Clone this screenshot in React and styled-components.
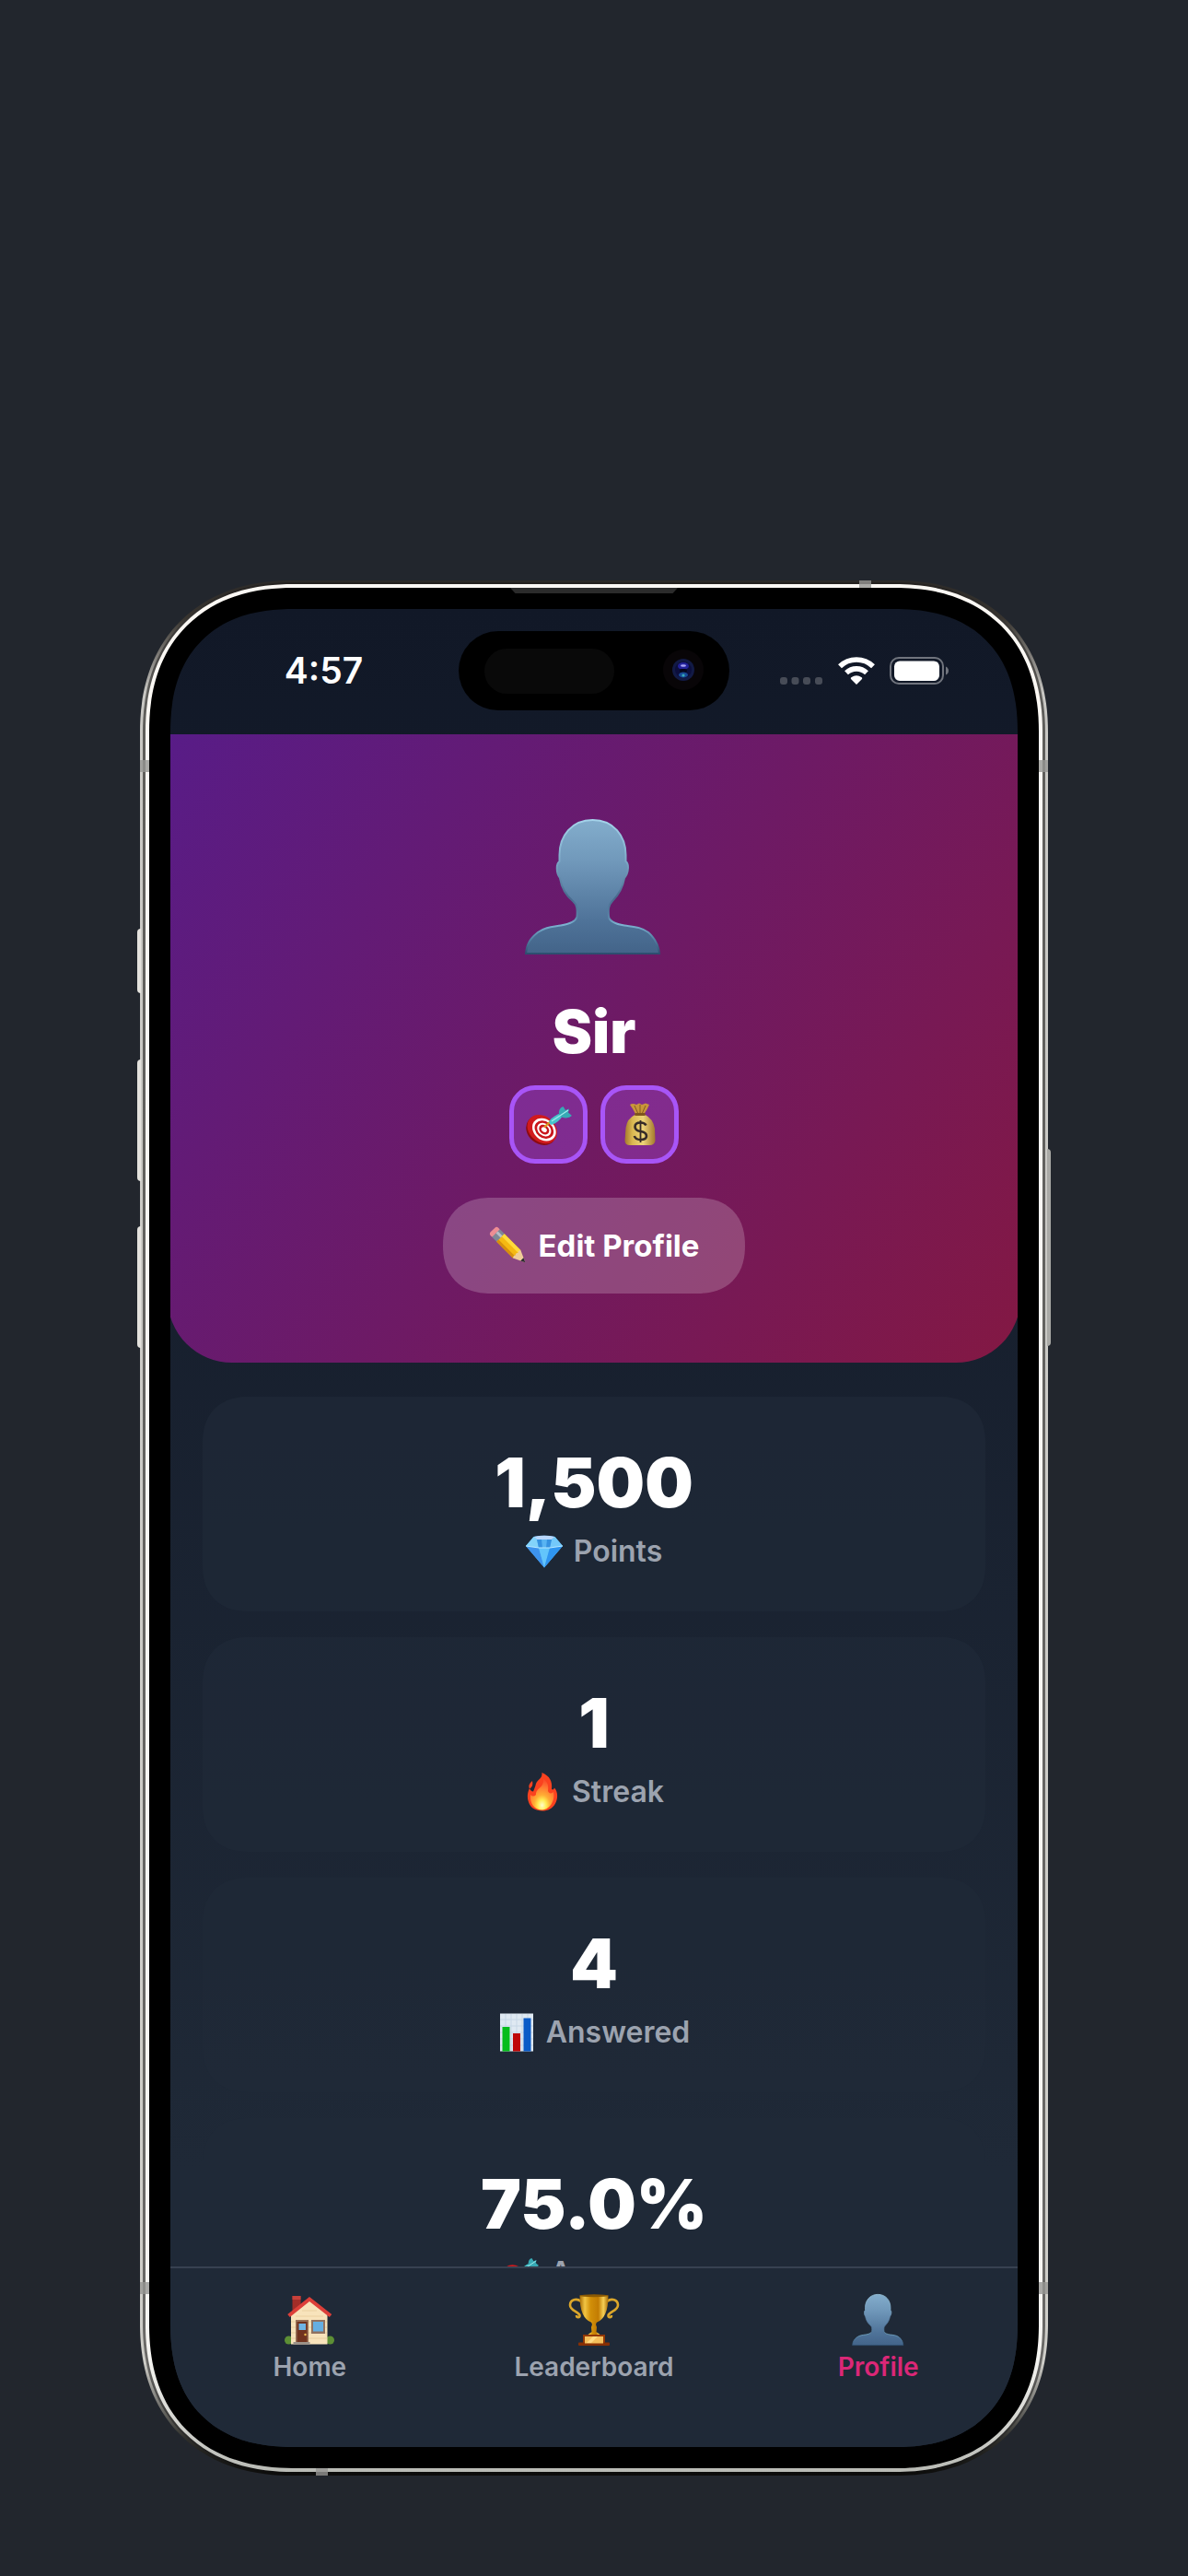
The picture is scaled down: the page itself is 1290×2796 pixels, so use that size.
import React from 'react';
import styled, { createGlobalStyle, css } from 'styled-components';

const GlobalStyle = createGlobalStyle`
  * {
    box-sizing: border-box;
  }

  body {
    margin: 0;
    background-color: #22262d;
    font-family: Inter, 'Liberation Sans', sans-serif;
    color: #fff;
  }
`;

// Smooth corners where the browser has them, plain round ones elsewhere
const smoothCorner = (round, smooth, k) => css`
  border-radius: ${round}px;

  @supports (corner-shape: superellipse(2)) {
    border-radius: ${smooth}px;
    corner-shape: superellipse(${k});
  }
`;

const Page = styled.main`
  min-height: 100vh;
  display: flex;
  flex-direction: column;
  justify-content: flex-end;
  padding: 0 152px 109px;
`;

/* ---------- phone body ---------- */

const Phone = styled.div`
  position: relative;
  flex: none;
  display: flex;
  width: 100%;
  min-height: 0;
  aspect-ratio: 986 / 2057;
`;

const OuterRim = styled.div`
  flex: 1;
  display: flex;
  min-width: 0;
  padding: 2px 3px;
  background: linear-gradient(#2c2a28, #38342f 2%, #c9c8c4 6%, #cfcec9 94%, #30302c 98%, #0c0c0b);
  ${smoothCorner(150, 165, 1.16)}
`;

const DarkRim = styled.div`
  flex: 1;
  display: flex;
  min-width: 0;
  padding: 2px 3px;
  background: linear-gradient(#24211f, #5f5e5b 6%, #6a6967 94%, #0c0c0b);
  ${smoothCorner(148, 163, 1.16)}
`;

const BrightRim = styled.div`
  flex: 1;
  display: flex;
  min-width: 0;
  padding: 4px;
  background: linear-gradient(#fbf8f4, #f6f5f2 94%, #b8bab4);
  ${smoothCorner(145, 160, 1.17)}
`;

const Bezel = styled.div`
  flex: 1;
  display: flex;
  min-width: 0;
  padding: 23px;
  background-color: #000;
  ${smoothCorner(141, 156, 1.18)}
`;

const SideKey = styled.span`
  position: absolute;
  top: ${({ $top }) => $top}%;
  height: ${({ $height }) => $height}%;
  width: 4px;
  background-color: #e4e2dd;
  ${({ $side }) =>
    $side === 'left'
      ? 'left: -3px; border-radius: 4px 0 0 4px;'
      : 'right: -3px; border-radius: 0 4px 4px 0; background-color: #a9a9a5;'}
`;

const Antenna = styled.span`
  position: absolute;
  background-color: rgba(150, 150, 147, 0.8);
  ${({ $edge, $at }) =>
    $edge === 'left' || $edge === 'right'
      ? `${$edge}: 0; top: ${$at}%; width: 10px; height: 13px;`
      : `${$edge}: 0; left: ${$at}%; width: 13px; height: 8px;`}
`;

const Earpiece = styled.span`
  position: absolute;
  top: 8px;
  left: 50%;
  width: 182px;
  height: 6px;
  margin-left: -91px;
  background-color: #2b2b2b;
  clip-path: polygon(0 0, 100% 0, 97% 100%, 3% 100%);
`;

/* ---------- screen ---------- */

const Screen = styled.div`
  flex: 1;
  display: flex;
  flex-direction: column;
  min-width: 0;
  overflow: hidden;
  background: linear-gradient(#111827, #1f2937 85%);
  ${smoothCorner(118, 135, 1.25)}
`;

const StatusBar = styled.header`
  flex: none;
  display: grid;
  grid-template-columns: 1fr 294px 1fr;
  align-items: center;
  height: 136px;
  padding: 0 20px 2px;
`;

const Time = styled.time`
  text-align: center;
  font-size: 39px;
  font-weight: 600;
  line-height: 48px;
`;

const Island = styled.div`
  display: flex;
  align-items: center;
  justify-content: space-between;
  height: 86px;
  padding: 0 27px 0 28px;
  border-radius: 43px;
  background-color: #000;
`;

const Sensor = styled.span`
  width: 141px;
  height: 49px;
  border-radius: 25px;
  background-color: #090909;
`;

const Indicators = styled.div`
  display: flex;
  align-items: center;
  justify-content: center;
  gap: 16px;
`;

const Scroller = styled.div`
  flex: 1 1 0;
  min-height: 0;
  margin: 0 -3px;
  overflow: hidden;
  contain: size;
`;

const Hero = styled.section`
  display: flex;
  flex-direction: column;
  align-items: center;
  padding: 92px 0 75px;
  border-radius: 0 0 70px 70px;
  background: linear-gradient(126deg, #581c87, #831843);
`;

const Name = styled.h1`
  margin: 45px 0 19px;
  font-size: 65px;
  font-weight: 900;
  line-height: 78px;
`;

const Badges = styled.div`
  display: flex;
  gap: 14px;
`;

const Badge = styled.span`
  display: flex;
  align-items: center;
  justify-content: center;
  width: 85px;
  height: 85px;
  border: 5px solid #a855f7;
  border-radius: 28px;
  background-color: rgba(168, 85, 247, 0.3);
`;

const EditButton = styled.button`
  display: flex;
  align-items: center;
  gap: 12px;
  height: 104px;
  margin-top: 37px;
  padding: 0 50px;
  border: 0;
  background-color: rgba(255, 255, 255, 0.2);
  color: #fff;
  font-family: inherit;
  font-size: 33px;
  font-weight: 700;
  cursor: pointer;
  ${smoothCorner(50, 52, 1.2)}
`;

const Stats = styled.section`
  display: flex;
  flex-direction: column;
  gap: 28px;
  padding: 37px 38px;
`;

const Card = styled.article`
  display: flex;
  flex-direction: column;
  align-items: center;
  gap: 8px;
  padding: 48px 0 43px;
  background-color: rgba(31, 41, 55, 0.7);
  ${smoothCorner(46, 50, 1.2)}
`;

const Value = styled.strong`
  font-size: 74px;
  font-weight: 900;
  line-height: 90px;
`;

const Label = styled.span`
  display: flex;
  align-items: center;
  gap: 12px;
  color: #9ca3af;
  font-size: 32px;
  font-weight: 600;
  line-height: 44px;
`;

const TabBar = styled.nav`
  flex: none;
  display: grid;
  grid-template-columns: repeat(3, 1fr);
  margin: 0 -3px;
  padding: 28px 0 70px;
  border-top: 2px solid #374151;
  background-color: #1f2937;
`;

const Tab = styled.a`
  display: flex;
  flex-direction: column;
  align-items: center;
  gap: 6px;
  color: ${({ $active }) => ($active ? '#db2777' : '#9ca3af')};
  font-size: 28px;
  font-weight: 600;
  line-height: 34px;
  text-decoration: none;
`;

/* ---------- drawings ---------- */

const Camera = () => (
  <svg width="46" height="46" viewBox="0 0 46 46" aria-hidden="true">
    <circle cx="23" cy="22" r="22" fill="#080507" />
    <circle cx="23" cy="22" r="12" fill="#121a45" />
    <circle cx="23" cy="22" r="9" fill="#0c0e3c" />
    <ellipse cx="23" cy="18" rx="6" ry="4" fill="#23229a" />
    <ellipse cx="23" cy="17.500" rx="3" ry="1.300" fill="#a9a5f5" />
    <rect x="19" y="21" width="8" height="4" rx="2" fill="#05051a" />
    <ellipse cx="23" cy="27.500" rx="5" ry="3" fill="#174a96" />
    <circle cx="23" cy="28" r="1.600" fill="#37a9b5" />
  </svg>
);

const SignalDots = () => (
  <svg width="47" height="30" viewBox="0 0 47 30" fill="#474c57" aria-hidden="true">
    <rect x="0" y="22" width="8" height="8" rx="3" />
    <rect x="12.500" y="22" width="8" height="8" rx="3" />
    <rect x="25" y="22" width="8" height="8" rx="3" />
    <rect x="38" y="22" width="8" height="8" rx="3" />
  </svg>
);

const Wifi = () => (
  <svg width="40" height="30" viewBox="0 0 40 30" aria-hidden="true">
    <g fill="none" stroke="#fff" strokeWidth="5.600">
      <path d="M2 10.300 A26 26 0 0 1 38 10.300" />
      <path d="M9 17.300 A16 16 0 0 1 31 17.300" />
    </g>
    <path d="M20 30 L14 24 Q13.300 23 14.300 22.300 Q20 18.200 25.700 22.300 Q26.700 23 26 24 Z" fill="#fff" />
  </svg>
);

const Battery = () => (
  <svg width="65" height="30" viewBox="0 0 65 30" aria-hidden="true">
    <rect x="1" y="1" width="57" height="28" rx="9" fill="none" stroke="#70747d" strokeWidth="2" />
    <rect x="5" y="4.500" width="49" height="21.500" rx="6" fill="#fff" />
    <path d="M61 10.500 Q64 12 64 15 Q64 18 61 19.500 Z" fill="#70747d" />
  </svg>
);

const Person = ({ size }) => (
  <svg width={size} height={size} viewBox="2 0 147 147" aria-hidden="true" overflow="visible">
    <defs>
      <linearGradient id="skin" x1="0" y1="0" x2="0" y2="1">
        <stop offset="0" stopColor="#83adcc" />
        <stop offset="0.300" stopColor="#7199bb" />
        <stop offset="0.750" stopColor="#4f7399" />
        <stop offset="1" stopColor="#436489" />
      </linearGradient>
      <linearGradient id="skinEdge" x1="0" y1="0" x2="0" y2="1">
        <stop offset="0" stopColor="#a4d3ea" />
        <stop offset="0.300" stopColor="#7fabc9" />
        <stop offset="0.580" stopColor="#48698d" />
        <stop offset="0.730" stopColor="#5b86a8" />
        <stop offset="0.780" stopColor="#7db4d2" />
        <stop offset="0.920" stopColor="#4b7598" />
        <stop offset="1" stopColor="#2d4d6f" />
      </linearGradient>
    </defs>
    <path
      d="M73.500 1 C51 1 37.500 18 37.500 39 V46 C34 48 33.500 58 38 64 C40 76 46 84 52 89 C57 93 57 99 56.500 106 C55 112 45 114.500 39 115.500 C30 117 22 117 14 123 C5 130 2 136 1 146 H146 C145 137 142 130 134 123 C126 117 118 117 108 115.500 C102 114.500 92 112 91 106 C90.500 99 90 94 95 89 C101 83 106 76 108 64 C113 58 113 48 109.500 46 V39 C109.500 18 96 1 73.500 1 Z"
      fill="url(#skin)"
      stroke="url(#skinEdge)"
      strokeWidth="2"
    />
  </svg>
);

const Target = ({ size }) => (
  <svg width={size} height={size} viewBox="0 0 50 50" aria-hidden="true">
    <g transform="translate(17.500 30) rotate(40) scale(0.930) translate(-18 -29)">
      <ellipse cx="18" cy="30.500" rx="19" ry="15.500" fill="#8d0b12" />
      <ellipse cx="18" cy="28.500" rx="19" ry="15" fill="#d01a1d" />
      <ellipse cx="20" cy="27.500" rx="15" ry="12" fill="#fff" />
      <ellipse cx="20" cy="27.500" rx="12" ry="9.500" fill="#c9171c" />
      <ellipse cx="20" cy="27.500" rx="9" ry="7" fill="#fff" />
      <ellipse cx="20" cy="27.500" rx="6.500" ry="5" fill="#c9171c" />
      <ellipse cx="20" cy="27.500" rx="3.500" ry="2.600" fill="#fff" />
    </g>
    <path d="M20 27.500 L27 21" stroke="#d99a1c" strokeWidth="2.200" />
    <path d="M25.500 20.500 Q30 15 38 12 L40 15 Q36 22 28 25 Q25 24 25.500 20.500 Z" fill="#45c4cb" />
    <path d="M36 14 Q35 7 40.500 5 L43 9 L47 7.500 L46 11.500 L50 15 Q46 19 38.500 16.500 Z" fill="#37aab5" />
    <path d="M28 21 L46 9" stroke="#a4edee" strokeWidth="1.200" />
  </svg>
);

const MoneyBag = () => (
  <svg width="50" height="50" viewBox="0 0 50 50" aria-hidden="true">
    <defs>
      <linearGradient id="sack" x1="0" x2="1" y1="0" y2="0">
        <stop offset="0" stopColor="#a5792c" />
        <stop offset="0.250" stopColor="#dab851" />
        <stop offset="0.600" stopColor="#edd479" />
        <stop offset="1" stopColor="#a3782c" />
      </linearGradient>
    </defs>
    <path d="M14 3 Q17 1 21 3 L24 1.500 L27 3 L31 1.500 L35 3 Q33 8 29.500 13 H20 Q17 7 14 3 Z" fill="#c9963a" />
    <path d="M19 4 L22.500 12 M25 3 V12 M31 4 L27.500 12" stroke="#845a20" strokeWidth="1" />
    <path d="M19.500 14 H30.500 Q39 18 41 29 L41.500 42 Q41 47 35 47 H14 Q8.500 47 8.500 42 L9.500 28 Q11 18 19.500 14 Z" fill="url(#sack)" />
    <rect x="19" y="12" width="12" height="3" rx="1.500" fill="#80551d" />
    <g fill="none" stroke="#352b28" strokeWidth="2.600">
      <path d="M31.500 25.500 Q30 22.500 25.500 22.500 Q19.500 22.500 19.500 27 Q19.500 31 25.500 32 Q32 33 32 37 Q32 41 25.500 41 Q20 41 18.800 37" />
      <path d="M25.500 20 V44" strokeWidth="1.800" />
    </g>
  </svg>
);

const Pencil = () => (
  <svg width="42" height="42" viewBox="0 0 42 42" aria-hidden="true">
    <g transform="translate(4 4) rotate(45)">
      <rect x="0" y="-6" width="6.500" height="12" rx="3" fill="#ee8d93" />
      <rect x="5" y="-6" width="7.500" height="12" fill="#7f8896" />
      <rect x="5" y="-3" width="7.500" height="3" fill="#b6bec8" />
      <rect x="12" y="-6" width="25" height="12" fill="#f5b912" />
      <rect x="12" y="-6" width="25" height="4" fill="#ffda3c" />
      <rect x="12" y="3" width="25" height="3" fill="#d78f0d" />
      <path d="M37 -6 L50 0 L37 6 Q35 3 37 2 Q35 0 37 -2 Q35 -4 37 -6 Z" fill="#f0cd98" />
      <path d="M45 -2.300 L50 0 L45 2.300 Z" fill="#2b2b32" />
    </g>
  </svg>
);

const Diamond = () => (
  <svg width="40" height="42" viewBox="0 0 40 42" aria-hidden="true">
    <path d="M8.500 5 Q20 2.500 31.500 5 L40 15 L20 38.500 L0 15 Z" fill="#52b1f5" />
    <path d="M8.500 5 Q20 2.500 31.500 5 L28 8 H12 Z" fill="#b9d7fb" />
    <path d="M8.500 5 L12 8 L14 17 L0 15 Z" fill="#83d3fa" />
    <path d="M31.500 5 L28 8 L26 17 L40 15 Z" fill="#74c9fa" />
    <path d="M12 8 H28 L26 17 H14 Z" fill="#3591e0" />
    <path d="M17 8 H23 L22 17 H18 Z" fill="#59b4f2" />
    <path d="M0 15 L14 17 L20 38.500 Z" fill="#3d93ee" />
    <path d="M14 17 H26 L20 38.500 Z" fill="#63c5fb" />
    <path d="M26 17 L40 15 L20 38.500 Z" fill="#2f95f0" />
    <path d="M0 15 L14 17 H26 L40 15" fill="none" stroke="#b7e8ff" strokeWidth="1" />
  </svg>
);

const Flame = () => (
  <svg width="40" height="42" viewBox="0 0 40 42" aria-hidden="true">
    <defs>
      <radialGradient id="fire" cx="0.500" cy="0.850" r="0.800">
        <stop offset="0" stopColor="#fffccb" />
        <stop offset="0.220" stopColor="#ffec54" />
        <stop offset="0.420" stopColor="#ffad34" />
        <stop offset="0.700" stopColor="#ff8033" />
        <stop offset="1" stopColor="#fb4e2b" />
      </radialGradient>
    </defs>
    <path
      d="M19.500 0 C28 4 31 9 30 18 C31.500 19 32.500 18 33 16.500 C37 21 37 28 34 33.500 C31 39 26 41.500 20 41.500 C12 41.500 7 38 5 32 C3 26 4 21 6 17 C7 19 8 20.500 10 20.500 C11 18 12 16 13 12 C15 7 20 7 19.500 0 Z M9 9 C10 13 9 16 6 17.500 C4.500 14 6 12 9 9 Z"
      fill="#fa421f"
    />
    <path
      d="M21 7 C25 10 27 13 26 20 C27 23 30 23 32 21 C34 29 29 40 20 40.500 C11 40.500 6 33 7 24 C9 26 11 26 13 24 C13 16 22 17 21 7 Z"
      fill="url(#fire)"
    />
  </svg>
);

const Chart = () => (
  <svg width="40" height="42" viewBox="0 0 40 42" aria-hidden="true">
    <rect x="2" y="0.500" width="36" height="41" fill="#dfe9f2" />
    <path d="M2 7 H38 M2 14 H38 M2 21 H38 M2 28 H38 M2 35 H38 M8 1 V41 M14 1 V41 M20 1 V41 M26 1 V41 M32 1 V41" stroke="#c7d7e6" />
    <rect x="4.500" y="15" width="8" height="26.500" fill="#06bd1c" />
    <rect x="16" y="22" width="8" height="19.500" fill="#bf0808" />
    <rect x="27.500" y="5.500" width="8" height="36" fill="#0a5bc7" />
  </svg>
);

const House = () => (
  <svg width="56" height="56" viewBox="0 0 56 56" aria-hidden="true">
    <rect x="9.500" y="2" width="9" height="16" fill="#a32d28" />
    <rect x="9.500" y="2" width="9" height="4" fill="#c8403a" />
    <circle cx="5.500" cy="50" r="4.500" fill="#5d8f35" />
    <circle cx="50.500" cy="50" r="4.500" fill="#5d8f35" />
    <path d="M8 22 L28 6 L47.500 22 V54.500 H8 Z" fill="#f8e3bb" />
    <path d="M8 30 H47 M8 36 H47 M8 42 H47 M8 48 H47 M13 24 H43 M20 18 H36" stroke="#ead0a0" />
    <path d="M5.500 23.500 L28 5.500 L51 23.500" fill="none" stroke="#dc3f39" strokeWidth="4" />
    <rect x="13" y="28" width="14" height="25" fill="#9a7358" />
    <rect x="14.500" y="30" width="11" height="23" fill="#713420" />
    <rect x="16.500" y="32" width="7.500" height="7" fill="#6fb4e4" />
    <circle cx="23.500" cy="44" r="1.200" fill="#edbd4d" />
    <rect x="10.500" y="52" width="18" height="3" fill="#9b9289" />
    <rect x="30" y="28" width="15" height="15" fill="#917260" />
    <rect x="32" y="30" width="11" height="10.500" fill="#65aee2" />
  </svg>
);

const Trophy = () => (
  <svg width="56" height="56" viewBox="0 0 56 56" aria-hidden="true">
    <defs>
      <linearGradient id="gold" x1="0" x2="1" y1="0" y2="0">
        <stop offset="0" stopColor="#a96c05" />
        <stop offset="0.180" stopColor="#f2c544" />
        <stop offset="0.380" stopColor="#d18f08" />
        <stop offset="0.650" stopColor="#c27c03" />
        <stop offset="0.830" stopColor="#f6cf55" />
        <stop offset="1" stopColor="#aa6c05" />
      </linearGradient>
    </defs>
    <g fill="none" stroke="#dca72b" strokeWidth="2.600">
      <path d="M14 8 C9 4 2 6 2 12 C2 18 11 19 12.500 23 C13 26 9 26 9 23" />
      <path d="M42 8 C47 4 54 6 54 12 C54 18 45 19 43.500 23 C43 26 47 26 47 23" />
    </g>
    <path d="M12.500 1.500 H43.500 C43.500 19 39 27 31.500 30.500 H24.500 C17 27 12.500 19 12.500 1.500 Z" fill="url(#gold)" />
    <ellipse cx="28" cy="1.800" rx="15.500" ry="1.500" fill="#8c5a04" />
    <path d="M24.500 29 H31.500 L30 33 L31 36 L30.500 41 L36 45 H20 L25.500 41 L25 36 L26 33 Z" fill="url(#gold)" />
    <rect x="16" y="44" width="24" height="10" fill="#923806" />
    <rect x="11" y="52.500" width="34" height="3.500" rx="1" fill="#872f04" />
    <rect x="18" y="46" width="20" height="7.500" fill="#f5bf5b" />
    <path d="M20 53 L27 46 H32 L25 53 Z" fill="#ffda83" />
  </svg>
);

/* ---------- page ---------- */

const stats = [
  { value: '1,500', label: 'Points', icon: <Diamond /> },
  { value: '1', label: 'Streak', icon: <Flame /> },
  { value: '4', label: 'Answered', icon: <Chart /> },
  { value: '75.0%', label: 'Accuracy', icon: <Target size={40} /> },
];

const tabs = [
  { label: 'Home', icon: <House /> },
  { label: 'Leaderboard', icon: <Trophy /> },
  { label: 'Profile', icon: <Person size={56} />, active: true },
];

const App = () => {
  return (
    <Page>
      <GlobalStyle />
      <Phone>
        <SideKey $side="left" $top={18.4} $height={3.4} />
        <SideKey $side="left" $top={25.3} $height={6.4} />
        <SideKey $side="left" $top={34.1} $height={6.4} />
        <SideKey $side="right" $top={30} $height={10.4} />
        <OuterRim>
          <DarkRim>
            <BrightRim>
              <Bezel>
                <Screen>
                  <StatusBar>
                    <Time>4:57</Time>
                    <Island>
                      <Sensor />
                      <Camera />
                    </Island>
                    <Indicators>
                      <SignalDots />
                      <Wifi />
                      <Battery />
                    </Indicators>
                  </StatusBar>

                  <Scroller>
                    <Hero>
                      <Person size={147} />
                      <Name>Sir</Name>
                      <Badges>
                        <Badge>
                          <Target size={50} />
                        </Badge>
                        <Badge>
                          <MoneyBag />
                        </Badge>
                      </Badges>
                      <EditButton type="button">
                        <Pencil />
                        Edit Profile
                      </EditButton>
                    </Hero>

                    <Stats>
                      {stats.map(({ value, label, icon }) => (
                        <Card key={label}>
                          <Value>{value}</Value>
                          <Label>
                            {icon}
                            {label}
                          </Label>
                        </Card>
                      ))}
                    </Stats>
                  </Scroller>

                  <TabBar>
                    {tabs.map(({ label, icon, active }) => (
                      <Tab key={label} href={`#${label.toLowerCase()}`} $active={active}>
                        {icon}
                        {label}
                      </Tab>
                    ))}
                  </TabBar>
                </Screen>
              </Bezel>
            </BrightRim>
          </DarkRim>
        </OuterRim>
        <Antenna $edge="left" $at={9.5} />
        <Antenna $edge="right" $at={9.5} />
        <Antenna $edge="left" $at={89.8} />
        <Antenna $edge="right" $at={89.8} />
        <Antenna $edge="top" $at={79.2} />
        <Antenna $edge="bottom" $at={19.4} />
        <Earpiece />
      </Phone>
    </Page>
  );
};

export default App;
